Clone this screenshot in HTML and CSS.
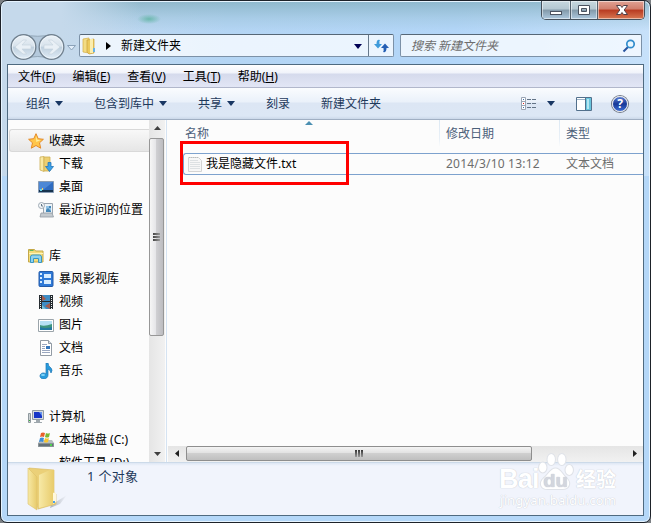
FILE: index.html
```html
<!DOCTYPE html>
<html lang="zh-CN">
<head>
    <meta charset="UTF-8">
    <meta name="viewport" content="width=device-width, initial-scale=1.0">
    <title>新建文件夹</title>
    <link rel="stylesheet" href="styles.css">
</head>
<body>
    <div class="window">
        <div class="titlebar">
            <div class="caption">
                <button class="cap min"><svg width="29" height="19"><rect x="8.500" y="10.500" width="11" height="3" fill="#fff" stroke="#4b5360"/></svg></button>
                <button class="cap max"><svg width="26" height="19"><path d="M7.500 4.500h11v9h-11zM10.500 7.500v3h5v-3z" fill="#fff" fill-rule="evenodd" stroke="#4b5360"/></svg></button>
                <button class="cap close"><svg width="47" height="19"><path d="M18.500 4.500h4l1.500 2 1.500-2h4l-3.300 4.500 3.300 4.500h-4l-1.500-2-1.500 2h-4l3.300-4.500z" fill="#fff" stroke="#514047"/></svg></button>
            </div>
        </div>

        <div class="navrow">
            <svg class="nav-buttons" width="70" height="28" viewBox="0 0 70 28">
                <defs>
                    <linearGradient id="orb" x2="0" y2="1">
                        <stop offset="0" stop-color="#edf3f8"/><stop offset=".45" stop-color="#d8e3ec"/>
                        <stop offset=".52" stop-color="#bfd0de"/><stop offset="1" stop-color="#e2eef8"/>
                    </linearGradient>
                </defs>
                <path d="M14 1.500Q29 5 43 1.500V26Q29 21 14 26z" fill="#b4c9dc" stroke="#93a7b8"/>
                <circle cx="14.500" cy="14" r="12.300" fill="url(#orb)" stroke="#71818f" stroke-width="1.400"/>
                <circle cx="14.500" cy="14" r="11.200" fill="none" stroke="#f4f9fd" stroke-opacity=".7"/>
                <circle cx="42.500" cy="14" r="12.300" fill="url(#orb)" stroke="#71818f" stroke-width="1.400"/>
                <circle cx="42.500" cy="14" r="11.200" fill="none" stroke="#f4f9fd" stroke-opacity=".7"/>
                <path d="M6 14l8-7h3.500l-4.500 5h9v4h-9l4.500 5H14z" fill="#e9f0f6" stroke="#c5d1db" stroke-width=".6"/>
                <path d="M51 14l-8-7h-3.500l4.500 5h-9v4h9l-4.500 5H43z" fill="#e9f0f6" stroke="#c5d1db" stroke-width=".6"/>
                <path d="M58.500 12.500h8l-4 4.500z" fill="#e2eefa" stroke="#8ba2b9"/>
            </svg>
            <div class="address">
                <svg width="16" height="18" viewBox="0 0 16 18">
                    <path d="M1 2l6-1v15l-6-1z" fill="#f3dc83" stroke="#d2ac45" stroke-width=".7"/>
                    <path d="M5 3l7-1v14l-5 1-2-2z" fill="#ecca5d" stroke="#caa23b" stroke-width=".7"/>
                    <path d="M8 2h3v14H8z" fill="#fbeeb0"/>
                    <path d="M11 11h2v4h-2z" fill="#67b1e8"/>
                </svg>
                <svg class="crumb" width="5" height="8"><path d="M0 0l5 4-5 4z" fill="#000"/></svg>
                <span class="path">新建文件夹</span>
                <svg class="drop" width="8" height="5"><path d="M0 0h8L4 5z" fill="#000055"/></svg>
                <div class="refresh">
                    <svg width="15" height="14" viewBox="0 0 15 14">
                        <path d="M6 1Q2.500 0 2.500 5H0l4 4.500L8 5H5.500Q5 2 6 1z" fill="#3e9bdb"/>
                        <path d="M9 13q3.500 1 3.500-4H15l-4-4.500L7 9h2.500q.5 3-.5 4z" fill="#245fb4"/>
                    </svg>
                </div>
            </div>
            <div class="search">
                <span>搜索 新建文件夹</span>
                <svg width="14" height="14" viewBox="0 0 14 14">
                    <path d="M6 8l-4.500 4.500" stroke="#28549f" stroke-width="2"/>
                    <circle cx="8.500" cy="5" r="3.700" fill="#eaf7ff" stroke="#318ccc" stroke-width="1.700"/>
                </svg>
            </div>
        </div>

        <div class="client">
            <div class="menubar">
                <span>文件(<u>F</u>)</span>
                <span>编辑(<u>E</u>)</span>
                <span>查看(<u>V</u>)</span>
                <span>工具(<u>T</u>)</span>
                <span>帮助(<u>H</u>)</span>
            </div>

            <div class="toolbar">
                <span class="tool arrow">组织</span>
                <span class="tool arrow">包含到库中</span>
                <span class="tool arrow">共享</span>
                <span class="tool">刻录</span>
                <span class="tool">新建文件夹</span>
                <div class="views">
                    <svg width="16" height="13" viewBox="0 0 16 13">
                        <path d="M.5.500h4v12h-4zM.5 4.500h4M.5 8.500h4" fill="#fff" stroke="#9aa5b4"/>
                        <path d="M2 2h1v1H2zM2 10h1v1H2z" fill="#3f70ac"/><path d="M2 6h1v1H2z" fill="#d22"/>
                        <path d="M6 2.500h4m1 0h4M6 6.500h4m1 0h4M6 10.500h4m1 0h4" stroke="#637487"/>
                    </svg>
                    <svg class="views-drop" width="8" height="5"><path d="M0 0h8L4 5z" fill="#193763"/></svg>
                    <svg class="preview" width="16" height="14" viewBox="0 0 16 14">
                        <path d="M.5.500h15v13H.5z" fill="#fff" stroke="#52708c"/><path d="M1 2.500h10" stroke="#9cb3c8"/>
                        <path d="M10 1h5v12h-5z" fill="#68c4dc"/><path d="M11 2h2v10h-2z" fill="#b5e7f2"/><path d="M9.500 1v12" stroke="#52708c"/>
                    </svg>
                    <span class="help">?</span>
                </div>
            </div>

            <div class="content">
                <div class="sidebar">
                    <div class="tree">
                        <div class="group">
                            <div class="item head selected">
                                <svg width="16" height="16" viewBox="0 0 16 16"><path d="M8 .7l2.200 5 5.200.6-3.900 3.500 1.200 5.400L8 12.500l-4.700 2.700 1.200-5.400L.6 6.300l5.200-.6z" fill="#ffc64a" stroke="#e58a27"/><path d="M8 3l1.300 3.700 3.500.3-4.500 2z" fill="#fff0a1"/></svg>
                                <span>收藏夹</span>
                            </div>
                            <div class="item">
                                <svg width="16" height="16" viewBox="0 0 16 16"><path d="M2 1l4-.5v15L2 14z" fill="#f9e9a5" stroke="#cdae54" stroke-width=".8"/><path d="M6 1h6v14H6z" fill="#edcf70" stroke="#cdae54" stroke-width=".8"/><path d="M10 6.500h3v4h2.500l-4 5-4-5H10z" fill="#3aa1e8" stroke="#2375b8" stroke-width=".8"/></svg>
                                <span>下载</span>
                            </div>
                            <div class="item">
                                <svg width="16" height="16" viewBox="0 0 16 16"><path d="M.5 2.500h15v11H.5z" fill="#2f6cc1" stroke="#879bb3"/><path d="M1 3h14L5 11H1z" fill="#4d88d5"/><path d="M1 11h14v2H1z" fill="#17334e"/><path d="M2 10h2v2H2z" fill="#61d3e9"/><path d="M4 9h1v2H4z" fill="#ffd255"/></svg>
                                <span>桌面</span>
                            </div>
                            <div class="item">
                                <svg width="16" height="16" viewBox="0 0 16 16"><path d="M5.500 1.500h9v10h-9z" fill="#ecf3f8" stroke="#9aa4af"/><path d="M8 4h5v5H8z" fill="#92c2e6"/><path d="M8 8l2-2 3 3v1H8zM11 4h2v2h-2z" fill="#4689ba"/><path d="M3 11h11l1.500 4H2z" fill="#c4cacf" stroke="#929ba3" stroke-width=".8"/><circle cx="3.500" cy="3.500" r="3" fill="#f3f6f8" stroke="#9faab4"/><path d="M3.500 2v2H5" fill="none" stroke="#637788"/></svg>
                                <span>最近访问的位置</span>
                            </div>
                        </div>

                        <div class="group">
                            <div class="item head">
                                <svg width="16" height="16" viewBox="0 0 16 16"><path d="M.5 3V1.500h6l1 1.500h7.500v11H.5z" fill="#f4dc7a" stroke="#c4a848"/><path d="M1 5h14v1H1z" fill="#fff3b8"/><path d="M1.500 2.500h4" stroke="#65b65b"/><path d="M2.500 14.500V9q0-2 2-2h7q2 0 2 2v5.500h-3v-4h-5v4z" fill="#8ed2ef" stroke="#3797c4"/></svg>
                                <span>库</span>
                            </div>
                            <div class="item">
                                <svg width="16" height="16" viewBox="0 0 16 16"><rect x="1" y=".5" width="14" height="15" rx="1" fill="#2e79d7" stroke="#245ba8"/><path d="M6 3h7v4H6zM6 9h7v4H6z" fill="#d8edff"/><path d="M2 2h2v2H2zM2 6h2v2H2zM2 10h2v2H2z" fill="#d8edff"/></svg>
                                <span>暴风影视库</span>
                            </div>
                            <div class="item">
                                <svg width="16" height="16" viewBox="0 0 16 16"><path d="M1 1h14v14H1z" fill="#262c31"/><path d="M4 1h8v6H4zM4 8h8v7H4z" fill="#3e8cc4"/><path d="M4 1l4 4-4 2zM12 9L7 12l5 3z" fill="#a65b4b"/><path d="M4 11l4 4H4z" fill="#7ac2d8"/><path d="M2.500 2v13M13.500 2v13" stroke="#eef2f2" stroke-dasharray="1 1"/></svg>
                                <span>视频</span>
                            </div>
                            <div class="item">
                                <svg width="16" height="16" viewBox="0 0 16 16"><path d="M.5 2.500h15v12H.5z" fill="#fff" stroke="#9ba4aa"/><path d="M2 4h12v9H2z" fill="#b6e1f4"/><path d="M2 8q4 2 12-1v6H2z" fill="#3f967e"/><path d="M2 10q5 2 12 0v3H2z" fill="#2479a0"/></svg>
                                <span>图片</span>
                            </div>
                            <div class="item">
                                <svg width="16" height="16" viewBox="0 0 16 16"><path d="M2.500.5h8l3 3v12h-11z" fill="#fff" stroke="#929ba5"/><path d="M10.500.5v3h3" fill="#d3dbe4" stroke="#929ba5"/><path d="M4 4.500h5M4 6.500h3M4 8.500h3M4 10.500h8M4 12.500h8" stroke="#9aa7c0"/><path d="M8 6h4v3H8z" fill="#3676bc"/></svg>
                                <span>文档</span>
                            </div>
                            <div class="item">
                                <svg width="16" height="16" viewBox="0 0 16 16"><path d="M8 0h2q0 3 3 5 2 2 0 5-.5-3-3-4v6c0 5-8 5-8 1 0-3 4-4 6-2z" fill="#289bdc" stroke="#1e76b4" stroke-width=".7"/><ellipse cx="5" cy="12" rx="2" ry="1" fill="#83d6fa"/></svg>
                                <span>音乐</span>
                            </div>
                        </div>

                        <div class="group">
                            <div class="item head">
                                <svg width="16" height="16" viewBox="0 0 16 16"><path d="M.5 4.500h2v9h-2z" fill="#ccd2d5" stroke="#8f999e"/><path d="M1 11h1v1H1z" fill="#31b82d"/><path d="M4.500 1.500h11v9h-11z" fill="#d5dade" stroke="#919ca4"/><path d="M6 3h8v6H6z" fill="#1636c7"/><path d="M11 3h3v4z" fill="#6894ed"/><path d="M8 11h4v2h2v1H6v-1h2z" fill="#9fa8ae"/></svg>
                                <span>计算机</span>
                            </div>
                            <div class="item">
                                <svg width="16" height="16" viewBox="0 0 16 16"><path d="M2 8h12l2 3v4H0v-4z" fill="#b7bec3"/><path d="M.5 11.500h15v3H.5z" fill="#657077" stroke="#899297"/><path d="M12 12h2v2h-2z" fill="#4ed44f"/><path d="M3 1q2-1 4 0L6 5Q4 4 2 5z" fill="#e9602b"/><path d="M8 1q2 1 4 0l-1 4Q9 6 7 5z" fill="#7bb832"/><path d="M2 6q2-1 4 0l-1 4q-2-1-4 0z" fill="#3d8ed8"/><path d="M7 6q2 1 4 0l-1 4q-2 1-4 0z" fill="#f8c52e"/></svg>
                                <span>本地磁盘 (C:)</span>
                            </div>
                            <div class="item">
                                <svg width="16" height="16" viewBox="0 0 16 16"><path d="M4 7h8l4 4v4H0v-4z" fill="#b7bec3"/></svg>
                                <span>软件工具 (D:)</span>
                            </div>
                        </div>
                    </div>
                    <div class="vscroll">
                        <svg width="17" height="17"><path d="M5 10h7L8.500 6z" fill="#404040"/></svg>
                        <div class="vthumb"><i></i><i></i><i></i></div>
                        <svg class="down" width="17" height="17"><path d="M5 7h7l-3.500 4z" fill="#404040"/></svg>
                    </div>
                </div>

                <div class="files">
                    <div class="columns">
                        <span class="name">名称</span>
                        <span class="date">修改日期</span>
                        <span class="type">类型</span>
                        <svg class="sort" width="8" height="4"><path d="M0 4h8L4 0z" fill="#4b8fb1"/></svg>
                    </div>
                    <div class="row">
                        <div class="name">
                            <svg width="14" height="16" viewBox="0 0 14 16"><path d="M.5 1.500h10l3 3v11H.5z" fill="#f7f7f7" stroke="#d4d4d4"/><path d="M2 4.500h8M2 6.500h10M2 8.500h10M2 10.500h10M2 12.500h10" stroke="#dde1e3"/><path d="M1 1.500h10" stroke="#b9bdbd" stroke-dasharray="1 1"/></svg>
                            <span>我是隐藏文件.txt</span>
                        </div>
                        <span class="date">2014/3/10 13:12</span>
                        <span class="type">文本文档</span>
                        <div class="marker"></div>
                    </div>
                    <div class="hscroll">
                        <svg width="17" height="16"><path d="M11 4v7L7 7.500z" fill="#202020"/></svg>
                        <div class="hthumb"><i></i><i></i><i></i></div>
                        <svg class="right" width="17" height="16"><path d="M7 4v7l4-3.500z" fill="#202020"/></svg>
                    </div>
                </div>
            </div>

            <div class="details">
                <svg width="42" height="46" viewBox="0 0 42 46">
                    <defs>
                        <linearGradient id="folder" x2="1" y2="0"><stop offset="0" stop-color="#f7e9a6"/><stop offset="1" stop-color="#e8cb6b"/></linearGradient>
                        <linearGradient id="shade"><stop offset="0" stop-color="#8e959e" stop-opacity=".7"/><stop offset="1" stop-color="#8e959e" stop-opacity="0"/></linearGradient>
                    </defs>
                    <path d="M24 38l16-10-7 9-10 4z" fill="url(#shade)"/>
                    <path d="M2 1l25 2v22l2 2v10l-18 5z" fill="#ebd078" stroke="#d8b85a" stroke-width=".6"/>
                    <path d="M12 8l11-5h4v34l-15 4z" fill="url(#folder)"/>
                    <path d="M1 1l9 9v33l-9-6z" fill="url(#folder)" stroke="#dec169" stroke-width=".6"/>
                    <path d="M26 26q3-2 3 1v8l-3 2z" fill="#fff8dd"/><path d="M26 34h2v2h-2z" fill="#49a1ec"/>
                </svg>
                <span>1 个对象</span>
            </div>
        </div>

        <div class="watermark">
            <div class="logo">
                <span class="bai">Bai</span>
                <svg width="36" height="38" viewBox="0 0 34 38" preserveAspectRatio="none">
                    <g fill="#fff" stroke="#dfe2e8">
                        <ellipse cx="4.500" cy="14.500" rx="4" ry="5.500"/><ellipse cx="12.500" cy="6.500" rx="4" ry="6"/>
                        <ellipse cx="22.500" cy="6.500" rx="4" ry="6"/><ellipse cx="29.500" cy="17" rx="4" ry="5.500"/>
                        <path d="M16.500 15c5 0 6 5 10 9 7 7 2 13-4 12.500H10C2 37 0 30 5 25c5-4 6-10 11.500-10z"/>
                    </g>
                    <text x="16.500" y="34" text-anchor="middle">du</text>
                </svg>
                <span class="cn">经验</span>
            </div>
            <div class="url">jingyan.baidu.com</div>
        </div>
    </div>
</body>
</html>
```

FILE: styles.css
```css
* {
    box-sizing: border-box;
}

body {
    margin: 0;
    background-color: #7c8084;
    font-family: "Noto Sans", "Noto Sans CJK SC", sans-serif;
    font-size: 12px;
    line-height: 16px;
    color: #000;
    overflow: hidden;
}

svg {
    display: block;
    flex-shrink: 0;
}

span {
    white-space: nowrap;
}

.window {
    position: relative;
    width: 651px;
    height: 523px;
    border: 1px solid #1d2229;
    border-radius: 7px;
    padding: 0 6px 6px;
    box-shadow: inset 0 0 0 1px #e6f4ff;
    background:
        radial-gradient(ellipse 12px 5px at 148px 18px, rgba(80, 175, 150, 0.7), transparent),
        linear-gradient(90deg, #c5d9eb 60px, transparent 140px) 0 0 / 100% 64px no-repeat,
        linear-gradient(180deg, rgba(130, 174, 190, 0.75), rgba(150, 190, 210, 0.4) 17px, transparent 30px),
        linear-gradient(90deg, #c5d9eb, #b4d5f4 35%, #b3d6f8 70%, #c7e1fa) 0 0 / 100% 175px no-repeat,
        #b4d7f8;
}

/* title bar */
.titlebar {
    height: 30px;
    display: flex;
    justify-content: flex-end;
}

.caption {
    display: flex;
    width: 104px;
    height: 19px;
    margin-right: -1px;
    border: 1px solid #45515c;
    border-top: none;
    border-radius: 0 0 5px 5px;
    overflow: hidden;
}

.cap {
    display: flex;
    padding: 0;
    border: none;
    border-right: 1px solid #53616d;
    box-shadow: inset 0 0 0 1px rgba(255, 255, 255, 0.5);
    background: linear-gradient(#c7d8df, #b4c7d1 45%, #8299a9 50%, #adc9df);
}

.min {
    width: 29px;
}

.max {
    width: 27px;
}

.close {
    width: 46px;
    border-right: none;
    background: linear-gradient(#e1a294, #d17e6c 45%, #b83a21 50%, #d87852);
}

/* address and search */
.navrow {
    height: 33px;
    display: flex;
    padding-top: 3px;
}

.nav-buttons {
    margin: -1px 0 0 2px;
}

.address,
.search {
    display: flex;
    align-items: center;
    height: 23px;
    border: 1px solid #7c91a7;
    border-top-color: #566777;
    border-radius: 2px;
    background-color: rgba(246, 250, 255, 0.84);
}

.address {
    width: 315px;
    padding-left: 2px;
}

.crumb {
    margin-left: 8px;
}

.path {
    margin-left: 10px;
}

.drop {
    margin: 1px 6px 0 auto;
}

.refresh {
    display: flex;
    align-items: center;
    justify-content: center;
    width: 25px;
    height: 21px;
    border-left: 1px solid #66788b;
}

.search {
    width: 242px;
    margin-left: 6px;
    padding: 0 5px 0 10px;
    justify-content: space-between;
    font-style: italic;
    color: #6d6d6d;
}

/* client area */
.client {
    display: flex;
    flex-direction: column;
    width: 637px;
    height: 452px;
    border: 1px solid #4f6a80;
    background-color: #fcfcfc;
}

.menubar {
    display: flex;
    height: 23px;
    padding: 4px 0 0 10px;
    gap: 17px;
    border-bottom: 1px solid #b1b7cb;
    background: linear-gradient(#fff, #f0f3fa 8px, #d5daec 9px, #e2e6f5);
}

.menubar u {
    text-underline-offset: 1px;
}

.toolbar {
    display: flex;
    align-items: center;
    height: 32px;
    padding: 0 15px 0 18px;
    border-bottom: 1px solid #a0afc3;
    background: linear-gradient(#fafcfe, #eaf1fa 14px, #dce6f4 15px, #dce7f5 28px, #cbd8e9);
    color: #1e395b;
}

.tool {
    margin-right: 31px;
}

.arrow::after {
    content: "";
    display: inline-block;
    margin-left: 5px;
    vertical-align: 2px;
    border: 4px solid transparent;
    border-top: 5px solid #193763;
    border-bottom: none;
}

.views {
    display: flex;
    align-items: center;
    margin-left: auto;
}

.views-drop {
    margin-left: 10px;
}

.preview {
    margin-left: 21px;
}

.help {
    width: 16px;
    height: 16px;
    margin-left: 20px;
    border-radius: 50%;
    border: 1px solid #e1e3e9;
    box-shadow: 0 0 0 1px #737a87;
    background: linear-gradient(#5c7ed1, #173897 50%, #3c6dd4);
    color: #fff;
    font: bold 12px/14px "Noto Sans", sans-serif;
    text-align: center;
}

.content {
    display: flex;
    height: 342px;
}

/* navigation pane */
.sidebar {
    display: flex;
    width: 159px;
    border-right: 1px solid #d5e3f2;
}

.tree {
    width: 141px;
    padding-top: 9px;
    overflow: hidden;
}

.group {
    margin-bottom: 23px;
}

.item {
    display: flex;
    align-items: center;
    height: 23px;
    padding-left: 30px;
    gap: 5px;
}

.head {
    padding-left: 20px;
}

.selected {
    margin-left: 1px;
    padding-left: 18px;
    border: 1px solid #d9d9d9;
    border-right: none;
    border-radius: 3px 0 0 3px;
    background: linear-gradient(#f8f8f8, #e6e6e6);
}

.vscroll {
    display: flex;
    flex-direction: column;
    width: 16px;
    background: linear-gradient(90deg, #e5e5e5, #f1f1f1);
}

.vthumb {
    display: flex;
    flex-direction: column;
    align-items: center;
    justify-content: center;
    gap: 1px;
    height: 198px;
    margin-top: 1px;
    width: 15px;
    border: 1px solid #979797;
    border-radius: 2px;
    background: linear-gradient(90deg, #f6f6f6, #e5e5e8 45%, #cfcfd2 50%, #bcbcc0);
}

.vthumb i {
    width: 7px;
    height: 2px;
    background: linear-gradient(90deg, #444, #999);
}

.down {
    margin-top: auto;
}

/* file list */
.files {
    display: flex;
    flex-direction: column;
    width: 476px;
}

.columns {
    position: relative;
    display: flex;
    height: 26px;
    margin-bottom: 7px;
    line-height: 27px;
    color: #4c607a;
}

.name {
    width: 272px;
    padding-left: 18px;
}

.date {
    width: 120px;
    padding-left: 7px;
}

.type {
    padding-left: 7px;
}

.columns .date,
.columns .type {
    border-left: 1px solid;
    border-image: linear-gradient(#dce8f3, #e9f0f7 70%, #fcfcfc) 1;
    padding-left: 6px;
}

.sort {
    position: absolute;
    left: 138px;
    top: 1px;
}

.row {
    position: relative;
    display: flex;
    align-items: center;
    height: 22px;
    margin-left: 16px;
    border: 1px solid #7da2ce;
    border-right: none;
    border-radius: 3px 0 0 3px;
    color: #6d6d6d;
}

.row .name {
    display: flex;
    align-items: center;
    width: 255px;
    padding-left: 4px;
    gap: 4px;
    color: #000;
}

.row .date {
    letter-spacing: 0.2px;
}

.marker {
    position: absolute;
    left: -4px;
    top: -13px;
    width: 169px;
    height: 44px;
    border: 3px solid #f00;
}

.hscroll {
    display: flex;
    height: 16px;
    margin: auto 0 0 1px;
    background: linear-gradient(#e5e5e5, #f1f1f1);
}

.hthumb {
    display: flex;
    align-items: center;
    justify-content: center;
    gap: 1px;
    width: 346px;
    height: 15px;
    margin-left: 1px;
    border: 1px solid #8e8e8e;
    border-radius: 2px;
    background: linear-gradient(#f4f4f4, #e2e2e2 45%, #cfcfcf 50%, #bfbfbf);
}

.hthumb i {
    width: 2px;
    height: 7px;
    background: linear-gradient(#333, #999);
}

.right {
    margin-left: auto;
}

/* details pane */
.details {
    display: flex;
    height: 53px;
    padding: 4px 0 0 19px;
    border-top: 1px solid #ccdae9;
    background: linear-gradient(#dee7f4, #f1f4fc 3px);
    font-size: 13px;
    color: #1e395b;
}

.details span {
    margin: 1px 0 0 18px;
    letter-spacing: 0.3px;
}

/* site mark over the lower corner */
.watermark {
    position: absolute;
    left: 498px;
    top: 452px;
    width: 120px;
    color: #fff;
    text-shadow: 0 0 1px #c6cad3, 0 0 1px #d0d4dc;
}

.logo {
    display: flex;
    align-items: flex-end;
    height: 38px;
    font: bold 27px/24px "Liberation Sans", sans-serif;
}

.bai {
    width: 39px;
    letter-spacing: -0.8px;
}

.logo text {
    font: bold 19px "Liberation Sans", sans-serif;
    fill: #d3d6de;
}

.cn {
    margin-left: 2px;
    font: bold 20px/24px "Noto Sans CJK SC", sans-serif;
}

.url {
    margin-top: 1px;
    padding-left: 1px;
    font: 13px/17px "Noto Sans", sans-serif;
    letter-spacing: 0.2px;
}
```
